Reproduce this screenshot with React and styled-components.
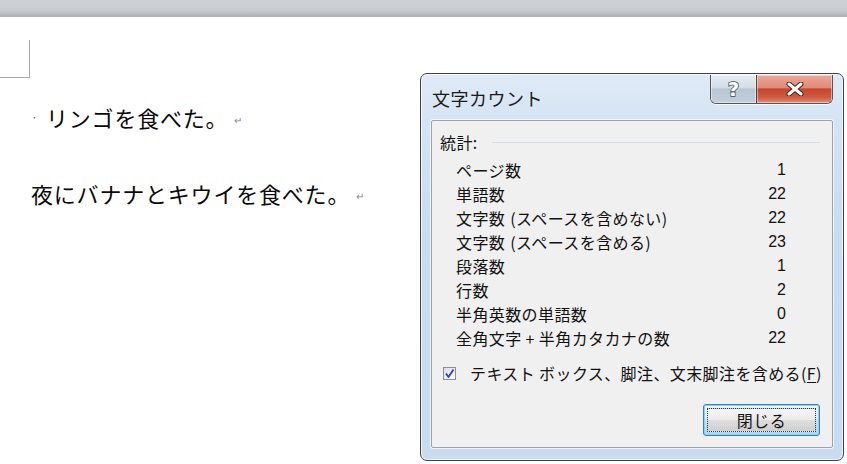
import React from "react";
import styled, { createGlobalStyle } from "styled-components";

const GlobalStyle = createGlobalStyle`
  html, body {
    margin: 0;
    padding: 0;
    background: #ffffff;
    overflow: hidden;
  }
  body {
    font-family: "Noto Sans CJK JP", "Noto Sans", sans-serif;
    color: #000;
  }
`;

const Page = styled.div`
  position: relative;
  width: 847px;
  height: 464px;
  overflow: hidden;
  background: #fff;
`;

const TopBar = styled.div`
  height: 17px;
  background: linear-gradient(#cfd2d7 0%, #c8cbd0 60%, #acafb3 100%);
`;

const DocBody = styled.div`
  padding-top: 23px;
`;

const CornerMark = styled.div`
  width: 30px;
  height: 38px;
  border-right: 1px solid #a9a9a9;
  border-bottom: 1px solid #a9a9a9;
  box-sizing: border-box;
`;

const Paragraph = styled.p`
  margin: ${(p) => p.$top}px 0 0 0;
  padding-left: 31px;
  font-size: 22px;
  line-height: 30px;
  display: flex;
  align-items: center;
  white-space: nowrap;
  letter-spacing: 0.8px;
  color: #0a0a0a;
`;

const SpaceDot = styled.span`
  display: inline-block;
  width: 15px;
  font-size: 12px;
  color: #666;
  line-height: 30px;
`;

const ReturnMark = styled.span`
  margin-left: 6px;
  font-size: 10px;
  color: #8a8a8a;
  position: relative;
  top: 3px;
`;

const Dialog = styled.div`
  position: absolute;
  left: 420px;
  top: 73px;
  width: 424px;
  height: 388px;
  box-sizing: border-box;
  border: 1px solid #3e4148;
  border-radius: 7px;
  background: linear-gradient(
    180deg,
    #dfeaf6 0%,
    #d5e4f4 12%,
    #cadcf0 40%,
    #c9dbef 100%
  );
  box-shadow: inset 0 0 0 1px rgba(255, 255, 255, 0.75);
  display: flex;
  flex-direction: column;
`;

const TitleBar = styled.div`
  height: 46px;
  display: flex;
  justify-content: space-between;
  align-items: flex-start;
  padding: 0 10px 0 11px;
`;

const Title = styled.div`
  font-size: 18px;
  line-height: 24px;
  padding-top: 12px;
  letter-spacing: 0.5px;
  color: #1a1a1a;
`;

const CaptionButtons = styled.div`
  display: flex;
  margin-top: 1px;
  border: 1px solid #4f5661;
  border-top: none;
  border-radius: 0 0 6px 6px;
  overflow: hidden;
  box-shadow: 0 1px 0 rgba(255, 255, 255, 0.8);
`;

const CaptionButton = styled.div`
  width: ${(p) => p.$w}px;
  height: 28px;
  display: flex;
  align-items: center;
  justify-content: center;
  box-sizing: border-box;
  background: ${(p) =>
    p.$close
      ? "linear-gradient(#e9a99a 0%, #df8b77 45%, #c7452e 50%, #cf5b41 80%, #e0947c 100%)"
      : "linear-gradient(#e6edf4 0%, #d3dde8 45%, #b9c6d4 50%, #c2cedb 100%)"};
  border-left: ${(p) => (p.$close ? "1px solid #5a3a36" : "none")};
  box-shadow: inset 0 0 0 1px rgba(255, 255, 255, 0.45);
`;

const HelpGlyph = styled.span`
  font-family: "DejaVu Sans", sans-serif;
  font-weight: bold;
  font-size: 20px;
  line-height: 1;
  color: #fff;
  -webkit-text-stroke: 1.4px #3a4556;
  paint-order: stroke fill;
`;

const Client = styled.div`
  flex: 1;
  margin: 0 10px 12px 10px;
  background: #f0f0f0;
  border: 1px solid #9aa1a8;
  border-radius: 2px;
  box-shadow: 0 0 0 1px rgba(255, 255, 255, 0.7);
  padding: 11px 12px 11px 8px;
  display: flex;
  flex-direction: column;
  font-size: 16px;
  letter-spacing: 0.4px;
  color: #111;
`;

const GroupHeader = styled.div`
  display: flex;
  align-items: center;
  gap: 14px;
  line-height: 20px;
`;

const GroupRule = styled.div`
  flex: 1;
  height: 1px;
  background: #d5dfe6;
`;

const Rows = styled.div`
  margin-top: 6px;
  padding: 0 34px 0 16px;
`;

const Row = styled.div`
  display: flex;
  justify-content: space-between;
  height: 24px;
  line-height: 24px;
  white-space: nowrap;
`;

const Paren = styled.span`
  margin-left: 5px;
`;

const Value = styled.span`
  font-family: "Liberation Sans", sans-serif;
  font-size: 16px;
  letter-spacing: 0;
`;

const CheckRow = styled.div`
  margin-top: 11px;
  display: flex;
  align-items: center;
  gap: 14px;
  height: 24px;
  padding-left: 3px;
  white-space: nowrap;
`;

const CheckBox = styled.div`
  width: 13px;
  height: 13px;
  box-sizing: border-box;
  border: 1px solid #8e8f8f;
  background: linear-gradient(135deg, #dcdcdc, #ffffff);
  display: flex;
  align-items: center;
  justify-content: center;
`;

const Underlined = styled.span`
  text-decoration: underline;
  text-underline-offset: 2px;
`;

const ButtonRow = styled.div`
  margin-top: auto;
  display: flex;
  justify-content: flex-end;
`;

const PushButton = styled.div`
  width: 117px;
  height: 32px;
  box-sizing: border-box;
  border: 1px solid #3c7fb1;
  border-radius: 3px;
  background: linear-gradient(#eaf6fd 0%, #d9f0fc 45%, #bee6fd 50%, #a7d9f5 100%);
  box-shadow: inset 0 0 0 1px #8ed0f3;
  padding: 3px;
  display: flex;
`;

const FocusRing = styled.div`
  flex: 1;
  border: 1px dotted #333;
  background: linear-gradient(#f4f4f4 0%, #ebebeb 48%, #dddddd 52%, #cfcfcf 100%);
  display: flex;
  align-items: center;
  justify-content: center;
  font-size: 16px;
  letter-spacing: 0.5px;
  line-height: 1;
`;

const stats = [
  ["ページ数", "1"],
  ["単語数", "22"],
  ["文字数", "22", "(スペースを含めない)"],
  ["文字数", "23", "(スペースを含める)"],
  ["段落数", "1"],
  ["行数", "2"],
  ["半角英数の単語数", "0"],
  ["全角文字 + 半角カタカナの数", "22"],
];

function CloseIcon() {
  return (
    <svg width="20" height="14" viewBox="0 0 20 14">
      <path
        d="M4 2 L16 12 M16 2 L4 12"
        stroke="#4a1f18"
        strokeWidth="5"
        strokeLinecap="round"
      />
      <path
        d="M4 2 L16 12 M16 2 L4 12"
        stroke="#ffffff"
        strokeWidth="3"
        strokeLinecap="round"
      />
    </svg>
  );
}

function CheckMark() {
  return (
    <svg width="11" height="11" viewBox="0 0 11 11">
      <path
        d="M2 5.5 L4.5 9 L9.5 1.5"
        fill="none"
        stroke="#2a43b8"
        strokeWidth="1.8"
        strokeLinejoin="round"
      />
    </svg>
  );
}

export default function App() {
  return (
    <Page>
      <GlobalStyle />
      <TopBar />
      <DocBody>
        <CornerMark />
        <Paragraph $top={24}>
          <SpaceDot>·</SpaceDot>
          リンゴを食べた。
          <ReturnMark>↵</ReturnMark>
        </Paragraph>
        <Paragraph $top={46}>
          夜にバナナとキウイを食べた。
          <ReturnMark>↵</ReturnMark>
        </Paragraph>
      </DocBody>

      <Dialog>
        <TitleBar>
          <Title>文字カウント</Title>
          <CaptionButtons>
            <CaptionButton $w={45}>
              <HelpGlyph>?</HelpGlyph>
            </CaptionButton>
            <CaptionButton $w={76} $close>
              <CloseIcon />
            </CaptionButton>
          </CaptionButtons>
        </TitleBar>
        <Client>
          <GroupHeader>
            <span>統計:</span>
            <GroupRule />
          </GroupHeader>
          <Rows>
            {stats.map(([label, value, note]) => (
              <Row key={label + (note || "")}>
                <span>
                  {label}
                  {note && <Paren>{note}</Paren>}
                </span>
                <Value>{value}</Value>
              </Row>
            ))}
          </Rows>
          <CheckRow>
            <CheckBox>
              <CheckMark />
            </CheckBox>
            <span>
              テキスト ボックス、脚注、文末脚注を含める(<Underlined>F</Underlined>)
            </span>
          </CheckRow>
          <ButtonRow>
            <PushButton>
              <FocusRing>閉じる</FocusRing>
            </PushButton>
          </ButtonRow>
        </Client>
      </Dialog>
    </Page>
  );
}
